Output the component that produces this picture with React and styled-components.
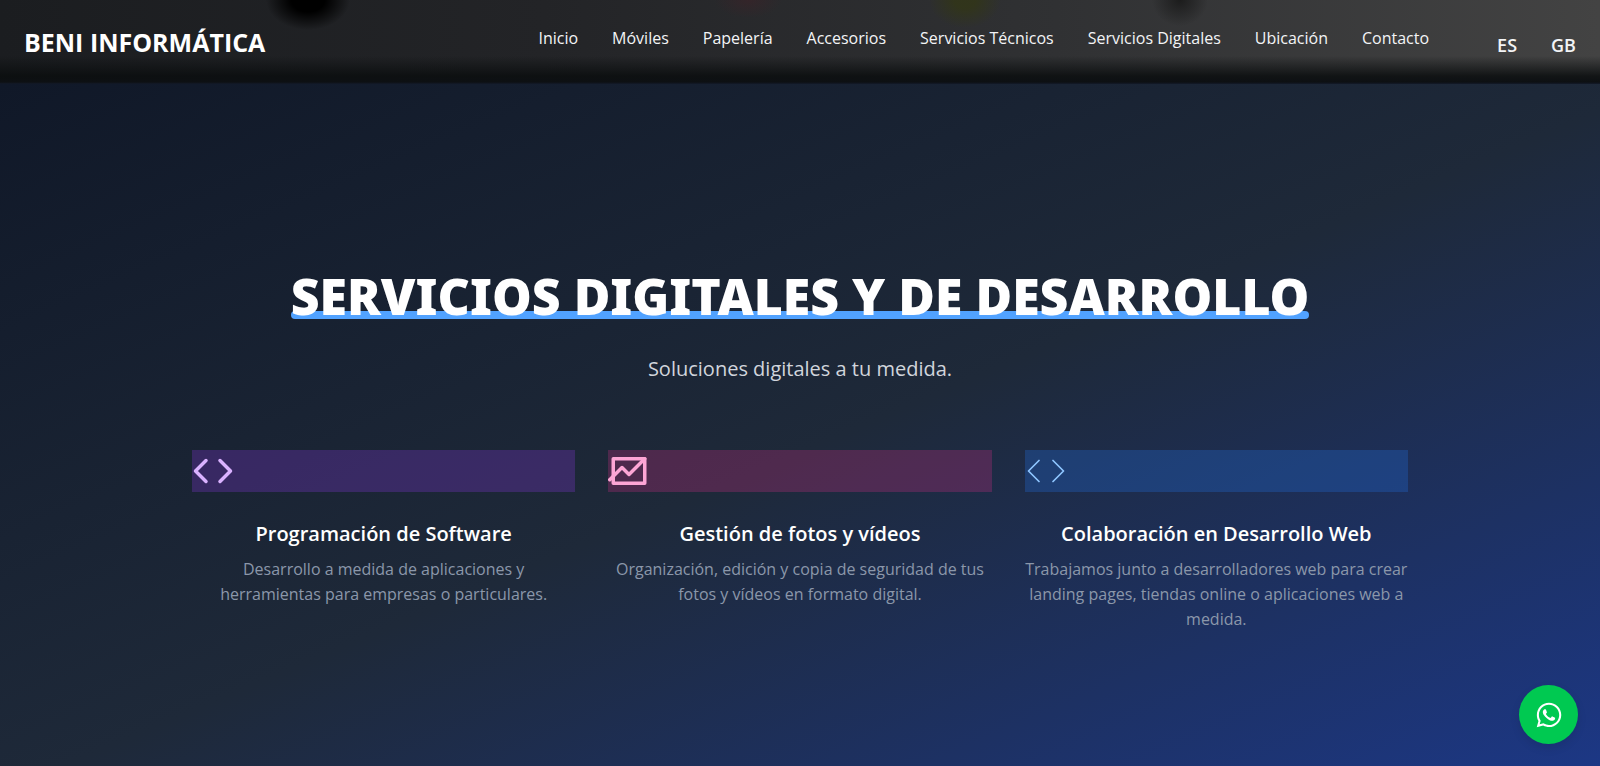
import styled, { createGlobalStyle } from "styled-components";
import { FaWhatsapp } from "react-icons/fa";

const GlobalStyles = createGlobalStyle`
  *,
  *::before,
  *::after {
    box-sizing: border-box;
    margin: 0;
    padding: 0;
  }

  body {
    font-family: "Open Sans", "Noto Sans", sans-serif;
    font-size: 16px;
    color: #fff;
    background: #101828;
  }
`;

const Page = styled.div`
  min-height: 100vh;
  display: flex;
  flex-direction: column;
`;

const Header = styled.header`
  display: flex;
  align-items: center;
  height: 84px;
  padding: 0 24px;
  /* dark fade at the bottom, soft spots of the photo behind, grey base */
  background:
    linear-gradient(
      to bottom,
      transparent 56px,
      rgba(10, 13, 14, 0.85) 76px,
      #0d1013 82px,
      #131a2a 84px
    ),
    radial-gradient(42px 30px at 308px 0, #000 40%, transparent),
    radial-gradient(34px 18px at 748px 0, rgba(70, 30, 38, 0.4), transparent),
    radial-gradient(36px 28px at 965px 0, rgba(50, 54, 22, 0.8) 30%, transparent),
    radial-gradient(28px 26px at 1180px 0, rgba(22, 22, 22, 0.8), transparent),
    linear-gradient(to right, #1b1d20, #232427 34%, #303133 66%, #434343);
`;

const Brand = styled.a`
  margin-right: auto;
  font-size: 25px;
  font-weight: 700;
  color: #fff;
  text-decoration: none;
`;

const Nav = styled.nav`
  display: flex;
  gap: 34px;
  padding-bottom: 8px;
`;

const NavLink = styled.a`
  font-size: 16px;
  font-weight: 500;
  color: #f3f4f6;
  text-decoration: none;
`;

const Languages = styled.div`
  display: flex;
  gap: 34px;
  margin-left: 68px;
  padding-top: 6px;
`;

const LangButton = styled.button`
  font-family: inherit;
  font-size: 18px;
  font-weight: 600;
  color: #f3f4f6;
  background: none;
  border: none;
  cursor: pointer;
`;

const Main = styled.main`
  flex: 1;
  display: flex;
  flex-direction: column;
  align-items: center;
  padding: 182px 32px 96px;
  background: linear-gradient(
    to bottom right,
    #101828,
    #1e2939 52%,
    #1c398e 106%
  );
`;

const Title = styled.h1`
  position: relative;
  z-index: 0;
  font-family: "Noto Sans", sans-serif;
  font-size: 50px;
  line-height: 60px;
  font-weight: 900;
  text-align: center;
  text-transform: uppercase;

  &::after {
    content: "";
    position: absolute;
    z-index: -1;
    left: 0;
    right: 0;
    bottom: 7px;
    height: 8px;
    border-radius: 4px;
    background: #51a2ff;
  }
`;

const Subtitle = styled.p`
  margin-top: 27px;
  font-size: 20px;
  line-height: 32px;
  color: #d1d5dc;
`;

const Services = styled.ul`
  display: grid;
  grid-template-columns: repeat(3, 1fr);
  gap: 33px;
  width: 100%;
  max-width: 1216px;
  margin-top: 65px;
  list-style: none;
`;

const Service = styled.li`
  text-align: center;
`;

const IconBar = styled.div`
  height: 42px;
  color: ${(props) => props.$color};
  background: ${(props) => props.$background};

  svg {
    display: block;
    width: 42px;
    height: 42px;
  }
`;

const ServiceName = styled.h2`
  margin-top: 26px;
  font-size: 20px;
  line-height: 32px;
  font-weight: 600;
`;

const ServiceText = styled.p`
  margin-top: 7px;
  font-size: 16px;
  line-height: 25px;
  color: #8b97aa;
`;

const WhatsappLink = styled.a`
  position: fixed;
  right: 22px;
  bottom: 22px;
  display: flex;
  align-items: center;
  justify-content: center;
  width: 59px;
  height: 59px;
  border-radius: 50%;
  font-size: 28px;
  color: #fff;
  background: #00c951;
  box-shadow: 0 4px 10px rgba(0, 0, 0, 0.1);
`;

const links = [
  "Inicio",
  "Móviles",
  "Papelería",
  "Accesorios",
  "Servicios Técnicos",
  "Servicios Digitales",
  "Ubicación",
  "Contacto",
];

const services = [
  {
    name: "Programación de Software",
    text: "Desarrollo a medida de aplicaciones y herramientas para empresas o particulares.",
    icon: <CodeIcon strokeWidth={2} />,
    color: "#dab2ff",
    background: "rgba(115, 51, 190, 0.35)",
  },
  {
    name: "Gestión de fotos y vídeos",
    text: "Organización, edición y copia de seguridad de tus fotos y vídeos en formato digital.",
    icon: <PictureIcon />,
    color: "#fda5d5",
    background: "rgba(180, 45, 120, 0.33)",
  },
  {
    name: "Colaboración en Desarrollo Web",
    text: "Trabajamos junto a desarrolladores web para crear landing pages, tiendas online o aplicaciones web a medida.",
    icon: <CodeIcon strokeWidth={1} />,
    color: "#8ec5ff",
    background: "rgba(34, 100, 200, 0.35)",
  },
];

// eslint-disable-next-line react/prop-types
function CodeIcon({ strokeWidth }) {
  return (
    <svg
      viewBox="0 0 24 24"
      fill="none"
      stroke="currentColor"
      strokeWidth={strokeWidth}
      strokeLinecap="round"
      strokeLinejoin="round"
      aria-hidden="true"
    >
      <path d="M8 6l-6 6 6 6M16 6l6 6-6 6" />
    </svg>
  );
}

function PictureIcon() {
  return (
    <svg
      viewBox="0 0 24 24"
      fill="none"
      stroke="currentColor"
      strokeWidth={2}
      strokeLinecap="round"
      strokeLinejoin="round"
      aria-hidden="true"
    >
      <path d="M3 5h18v14H3z" />
      <path d="M1 17l7-7 4 4 9-9" />
    </svg>
  );
}

function App() {
  return (
    <>
      <GlobalStyles />
      <Page>
        <Header>
          <Brand href="#inicio">BENI INFORMÁTICA</Brand>
          <Nav>
            {links.map((link) => (
              <NavLink href="#" key={link}>
                {link}
              </NavLink>
            ))}
          </Nav>
          <Languages>
            <LangButton>ES</LangButton>
            <LangButton>GB</LangButton>
          </Languages>
        </Header>

        <Main>
          <Title>Servicios digitales y de desarrollo</Title>
          <Subtitle>Soluciones digitales a tu medida.</Subtitle>

          <Services>
            {services.map((service) => (
              <Service key={service.name}>
                <IconBar
                  $color={service.color}
                  $background={service.background}
                >
                  {service.icon}
                </IconBar>
                <ServiceName>{service.name}</ServiceName>
                <ServiceText>{service.text}</ServiceText>
              </Service>
            ))}
          </Services>
        </Main>

        <WhatsappLink href="#whatsapp" aria-label="WhatsApp">
          <FaWhatsapp />
        </WhatsappLink>
      </Page>
    </>
  );
}

export default App;
